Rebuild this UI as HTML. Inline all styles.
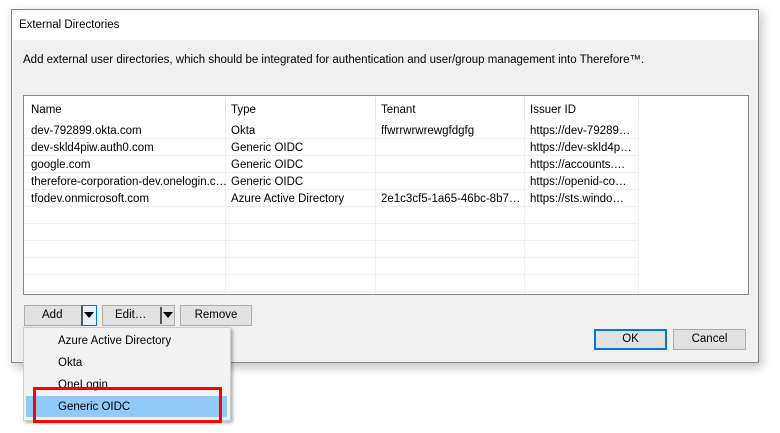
<!DOCTYPE html>
<html><head><style>
*{margin:0;padding:0;box-sizing:border-box}
body{width:780px;height:433px;background:#fff;position:relative;overflow:hidden;font-family:"Liberation Sans",sans-serif;font-size:11.5px;line-height:15px;color:#000}
.a{position:absolute}
.dlg{left:11px;top:9px;width:748px;height:354px;border:1px solid #888;background:#f0f0f0;box-shadow:3px 4px 10px rgba(0,0,0,.25)}
.title{left:0;top:0;width:746px;height:30px;background:#fff}
.list{left:23px;top:95px;width:726px;height:200px;border:1px solid #828790;background:#fff;overflow:hidden}
.row{position:absolute;left:0;width:615px;height:17px;border-bottom:1px solid #f0f0f0}
.c{position:absolute;top:2px;white-space:nowrap}
.vl{position:absolute;top:26px;width:1px;height:174px;background:#f0f0f0}
.hv{position:absolute;top:1px;width:1px;height:24px;background:#e5e5e5}
.btn{position:absolute;height:21px;border:1px solid #adadad;background:#e1e1e1;text-align:center;line-height:19px}
.tri{position:absolute;width:0;height:0;border-left:5px solid transparent;border-right:5px solid transparent;border-top:6px solid #000}
</style></head><body>
<div class="a dlg">
<div class="a title"></div>
<div class="a" style="left:7px;top:8px">External Directories</div>
<div class="a" style="left:11px;top:43px">Add external user directories, which should be integrated for authentication and user/group management into Therefore™.</div>
</div>
<div class="a list">
<div class="hv" style="left:201px"></div><div class="hv" style="left:351px"></div><div class="hv" style="left:500px"></div><div class="hv" style="left:614px"></div>
<div class="c" style="left:7px;top:7px">Name</div><div class="c" style="left:207px;top:7px">Type</div><div class="c" style="left:357px;top:7px">Tenant</div><div class="c" style="left:506px;top:7px">Issuer ID</div>
<div class="vl" style="left:201px"></div><div class="vl" style="left:351px"></div><div class="vl" style="left:500px"></div><div class="vl" style="left:614px"></div>
<div class="row" style="top:26px"><span class="c" style="left:7px">dev-792899.okta.com</span><span class="c" style="left:207px">Okta</span><span class="c" style="left:357px">ffwrrwrwrewgfdgfg</span><span class="c" style="left:506px">https://dev-79289…</span></div>
<div class="row" style="top:43px"><span class="c" style="left:7px">dev-skld4piw.auth0.com</span><span class="c" style="left:207px">Generic OIDC</span><span class="c" style="left:506px">https://dev-skld4p…</span></div>
<div class="row" style="top:60px"><span class="c" style="left:7px">google.com</span><span class="c" style="left:207px">Generic OIDC</span><span class="c" style="left:506px">https://accounts.…</span></div>
<div class="row" style="top:77px"><span class="c" style="left:7px">therefore-corporation-dev.onelogin.c…</span><span class="c" style="left:207px">Generic OIDC</span><span class="c" style="left:506px">https://openid-co…</span></div>
<div class="row" style="top:94px"><span class="c" style="left:7px">tfodev.onmicrosoft.com</span><span class="c" style="left:207px">Azure Active Directory</span><span class="c" style="left:357px">2e1c3cf5-1a65-46bc-8b7…</span><span class="c" style="left:506px">https://sts.windo…</span></div>
<div class="row" style="top:111px"></div><div class="row" style="top:128px"></div><div class="row" style="top:145px"></div><div class="row" style="top:162px"></div><div class="row" style="top:179px"></div>
</div>
<div class="btn" style="left:24px;top:305px;width:73px;text-align:left;padding-left:17px">Add</div>
<div class="a" style="left:81px;top:305px;width:16px;height:21px;border:1px solid #0078d7;background:#e5f1fb;border-left:2px solid #555"></div>
<div class="tri" style="left:84px;top:312px"></div>
<div class="btn" style="left:102px;top:305px;width:73px;text-align:left;padding-left:12px">Edit…</div>
<div class="a" style="left:160px;top:307px;width:2px;height:17px;background:#555"></div>
<div class="tri" style="left:163px;top:312px"></div>
<div class="btn" style="left:180px;top:305px;width:72px">Remove</div>
<div class="btn" style="left:594px;top:329px;width:73px;border:2px solid #0078d7;line-height:17px">OK</div>
<div class="btn" style="left:673px;top:329px;width:73px">Cancel</div>
<div class="a" style="left:23px;top:327px;width:208px;height:94px;background:#f2f2f2;border:1px solid #ccc;box-shadow:2px 2px 3px rgba(0,0,0,.3)"></div>
<div class="a" style="left:26px;top:396px;width:201px;height:21px;background:#91c9f7"></div>
<div class="a" style="left:58px;top:334px">Azure Active Directory</div>
<div class="a" style="left:58px;top:356px">Okta</div>
<div class="a" style="left:58px;top:378px">OneLogin</div>
<div class="a" style="left:58px;top:400px">Generic OIDC</div>
<div class="a" style="left:33px;top:387px;width:189px;height:36px;border:3px solid #f00"></div>
</body></html>
